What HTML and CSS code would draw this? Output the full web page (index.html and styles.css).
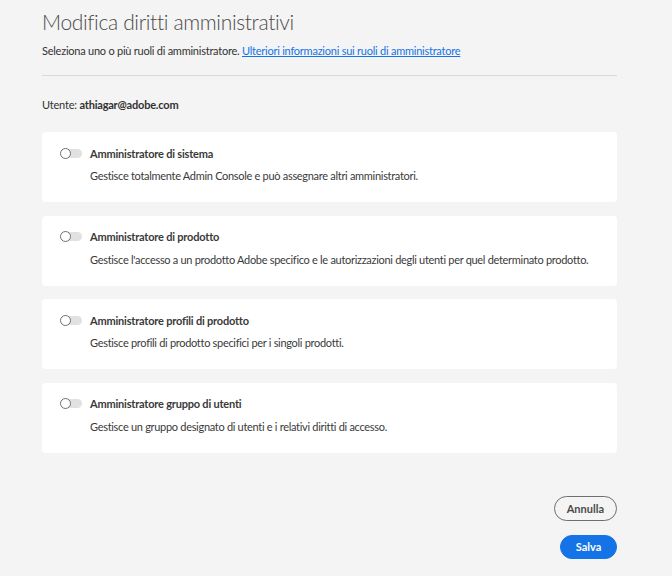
FILE: index.html
```html
<!DOCTYPE html>
<html lang="it">
<head>
<meta charset="utf-8">
<link rel="stylesheet" href="styles.css">
</head>
<body>
<div class="page">
  <h1 class="title">Modifica diritti amministrativi</h1>
  <p class="subtitle">Seleziona uno o più ruoli di amministratore. <a href="#" class="link">Ulteriori informazioni sui ruoli di amministratore</a></p>
  <hr class="divider">
  <p class="user">Utente: <strong>athiagar@adobe.com</strong></p>
  <div class="cards">
    <div class="card">
      <div class="card-head"><span class="toggle"></span><span class="card-title">Amministratore di sistema</span></div>
      <p class="card-desc">Gestisce totalmente Admin Console e può assegnare altri amministratori.</p>
    </div>
    <div class="card">
      <div class="card-head"><span class="toggle"></span><span class="card-title">Amministratore di prodotto</span></div>
      <p class="card-desc">Gestisce l'accesso a un prodotto Adobe specifico e le autorizzazioni degli utenti per quel determinato prodotto.</p>
    </div>
    <div class="card">
      <div class="card-head"><span class="toggle"></span><span class="card-title">Amministratore profili di prodotto</span></div>
      <p class="card-desc">Gestisce profili di prodotto specifici per i singoli prodotti.</p>
    </div>
    <div class="card">
      <div class="card-head"><span class="toggle"></span><span class="card-title">Amministratore gruppo di utenti</span></div>
      <p class="card-desc">Gestisce un gruppo designato di utenti e i relativi diritti di accesso.</p>
    </div>
  </div>
  <div class="actions">
    <button class="btn btn-secondary">Annulla</button>
    <button class="btn btn-primary">Salva</button>
  </div>
</div>
</body>
</html>
```

FILE: styles.css
```css
html, body {
  margin: 0;
  padding: 0;
  background: #f4f4f4;
}
body {
  font-family: "Lato", "Noto Sans", sans-serif;
  color: #2c2c2c;
}
.page {
  width: 575px;
  margin-left: 42px;
  padding-top: 8px;
}
.title {
  margin: 0;
  font-size: 21px;
  font-weight: 300;
  letter-spacing: -0.35px;
  color: #4b4b4b;
  line-height: 28px;
}
.subtitle {
  margin: 7px 0 0;
  font-size: 11px;
  line-height: 16px;
  letter-spacing: -0.24px;
  color: #323232;
}
.link {
  color: #1473e6;
}
.divider {
  border: 0;
  border-top: 1px solid #dadada;
  margin: 16px 0 0;
}
.user {
  margin: 21px 0 0;
  font-size: 11px;
  line-height: 16px;
  letter-spacing: -0.2px;
  color: #323232;
}
.cards {
  display: flex;
  flex-direction: column;
  gap: 13.5px;
  margin-top: 19px;
}
.card {
  background: #fff;
  border-radius: 4px;
  height: 70px;
  box-sizing: border-box;
  padding: 13px 19px 0;
}
.card-head {
  display: flex;
  align-items: center;
  gap: 8px;
  height: 16px;
}
.toggle {
  position: relative;
  width: 21px;
  height: 9px;
  border-radius: 5px;
  background: #e1e1e1;
}
.toggle::before {
  content: "";
  position: absolute;
  left: -1px;
  top: -1px;
  width: 9px;
  height: 9px;
  border-radius: 50%;
  border: 1px solid #6e6e6e;
  background: #fff;
}
.card-title {
  font-size: 11px;
  font-weight: 700;
  letter-spacing: -0.2px;
  color: #3a3a3a;
}
.card-desc {
  margin: 7px 0 0 29px;
  font-size: 11px;
  line-height: 16px;
  letter-spacing: -0.3px;
  white-space: nowrap;
  color: #3a3a3a;
}
.actions {
  display: flex;
  flex-direction: column;
  align-items: flex-end;
  gap: 14px;
  margin-top: 43px;
}
.btn {
  font-family: inherit;
  font-size: 11px;
  font-weight: 700;
  height: 25px;
  border-radius: 13px;
  padding: 0 12px;
  cursor: pointer;
}
.btn-secondary {
  background: transparent;
  border: 1px solid #6e6e6e;
  color: #4b4b4b;
  min-width: 62px;
}
.btn-primary {
  background: #1473e6;
  border: 1px solid #1473e6;
  color: #fff;
  min-width: 57px;
  height: 24px;
}
```
